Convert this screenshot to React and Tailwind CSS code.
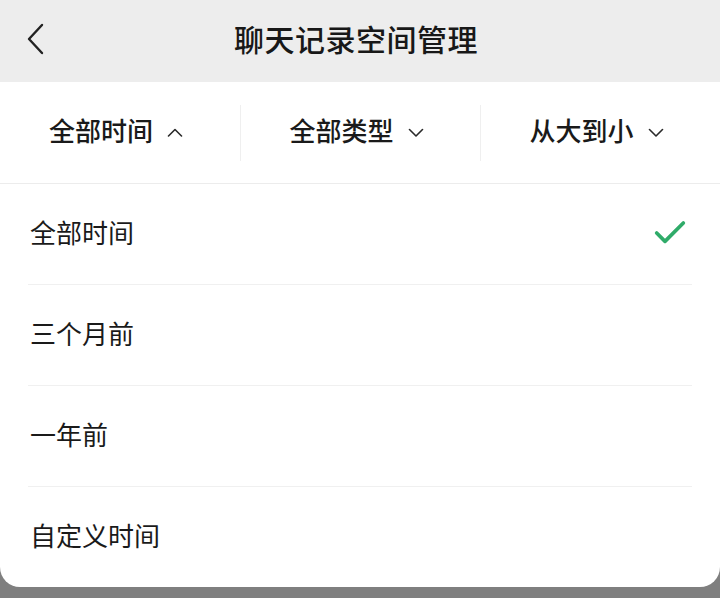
import { Check } from 'lucide-react';

const font = { fontFamily: '"Noto Sans CJK SC", "Noto Sans", sans-serif' };

const filters = [
  { label: '全部时间', open: true },
  { label: '全部类型', open: false },
  { label: '从大到小', open: false },
];

const options = ['全部时间', '三个月前', '一年前', '自定义时间'];

function Caret({ up }) {
  return (
    <svg width="16" height="9" viewBox="0 0 16 9" className="shrink-0">
      <path
        d={up ? 'M1.5 8L8 1.5L14.5 8' : 'M1.5 1.5L8 8L14.5 1.5'}
        fill="none"
        stroke="#2a2a2a"
        strokeWidth="1.6"
        strokeLinecap="round"
        strokeLinejoin="round"
      />
    </svg>
  );
}

export default function App() {
  return (
    <div className="h-[598px] w-[720px] bg-[#7f7f7f] overflow-hidden flex flex-col" style={font}>
      {/* top bar */}
      <div className="h-[82px] bg-[#ededed] flex items-center relative shrink-0">
        <div className="pl-[26px] flex items-center mb-[4px]">
          <svg width="20" height="32" viewBox="0 0 20 32">
            <path d="M16 2L3 16L16 30" fill="none" stroke="#222" strokeWidth="2.4" strokeLinecap="round" strokeLinejoin="round" />
          </svg>
        </div>
        <div className="absolute inset-0 flex items-center justify-center pointer-events-none">
          <span className="text-[30px] font-medium text-[#181818] ml-[-8px] mb-[5px] tracking-[0.5px]">聊天记录空间管理</span>
        </div>
      </div>

      <div className="bg-white rounded-b-[20px] shrink-0">
        {/* filter tabs */}
        <div className="h-[102px] border-b border-[#ececec] flex items-center">
          {filters.map((f, i) => (
            <div key={f.label} className="flex-1 flex items-center relative h-full">
              {i > 0 && <div className="w-px h-[56px] bg-[#efefef]" />}
              <div className="flex-1 flex items-center justify-center gap-[14px] pr-[8px]">
                <span className="text-[26px] font-medium text-[#1a1a1a] leading-none mb-[5px]">{f.label}</span>
                <Caret up={f.open} />
              </div>
            </div>
          ))}
        </div>

        {/* options */}
        <div className="px-[28px]">
          {options.map((o, i) => (
            <div
              key={o}
              className={`flex items-center justify-between ${i < options.length - 1 ? 'h-[101px] border-b border-[#f0f0f0]' : 'h-[100px]'}`}
            >
              <span className="text-[26px] text-[#1a1a1a] leading-none pl-[2px] mb-[4px]">{o}</span>
              {i === 0 && <Check className="w-[40px] h-[40px] text-[#2fab69] mr-[2px] mb-[2px]" strokeWidth={2.2} />}
            </div>
          ))}
        </div>
      </div>
    </div>
  );
}
